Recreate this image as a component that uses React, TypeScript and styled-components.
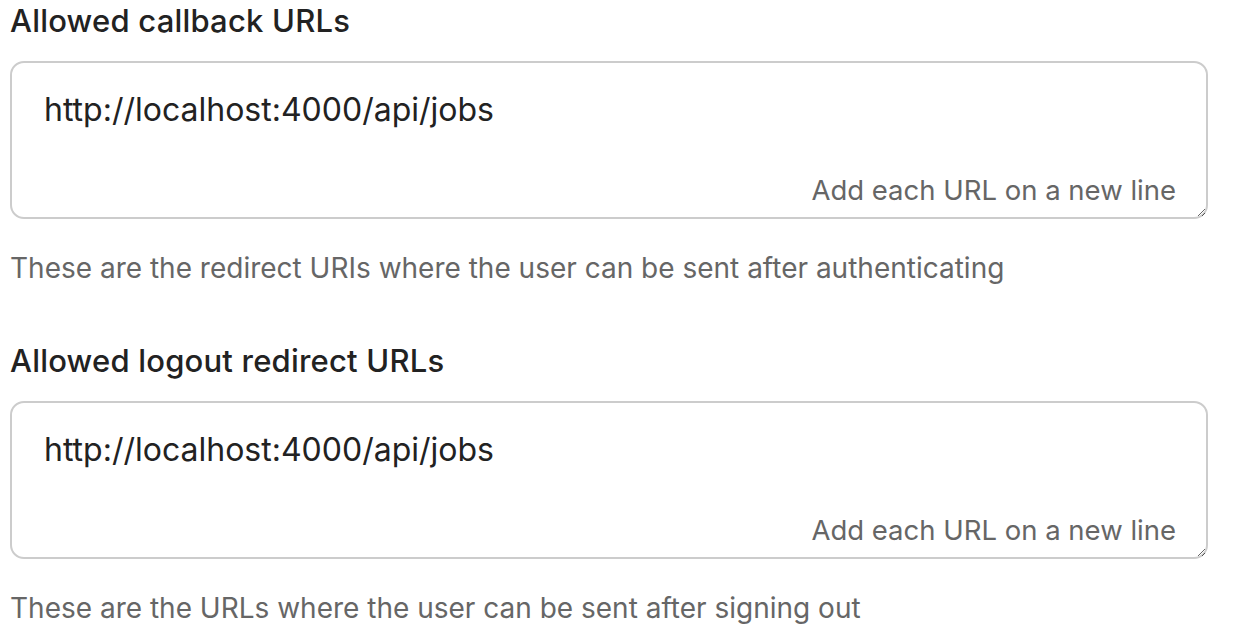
import React, { FC } from 'react';
import styled, { createGlobalStyle } from 'styled-components';

const GlobalStyle = createGlobalStyle`
  body {
    margin: 0;
    background: #ffffff;
    font-family: Inter, "Noto Sans", sans-serif;
  }
`;

const Page = styled.div`
  display: flex;
  flex-direction: column;
  gap: 58px;
  width: 1198px;
  padding: 3px 0 0 10px;
`;

const Section = styled.section`
  display: flex;
  flex-direction: column;
`;

const Label = styled.label`
  font-size: 31px;
  line-height: 36px;
  font-weight: 500;
  letter-spacing: 0.2px;
  color: #222222;
  margin-bottom: 22px;
`;

const Field = styled.div`
  position: relative;
  display: flex;
`;

const Textarea = styled.textarea`
  box-sizing: border-box;
  width: 100%;
  height: 158px;
  padding: 24px 32px;
  border: 2px solid #cccccc;
  border-radius: 14px;
  font-family: Inter, "Noto Sans", sans-serif;
  font-size: 32px;
  line-height: 45px;
  color: #222222;
  background: #ffffff;
  outline: none;
  resize: vertical;
`;

const Hint = styled.span`
  position: absolute;
  right: 32px;
  bottom: 12px;
  font-size: 27.5px;
  line-height: 34px;
  color: #666666;
  pointer-events: none;
`;

const Description = styled.p`
  margin: 32px 0 0;
  font-size: 28px;
  line-height: 34px;
  color: #666666;
`;

interface UrlFieldProps {
  id: string;
  label: string;
  value: string;
  description: string;
}

const UrlField: FC<UrlFieldProps> = ({ id, label, value, description }) => (
  <Section>
    <Label htmlFor={id}>{label}</Label>
    <Field>
      <Textarea id={id} defaultValue={value} spellCheck={false} />
      <Hint>Add each URL on a new line</Hint>
    </Field>
    <Description>{description}</Description>
  </Section>
);

const App: FC = () => (
  <>
    <GlobalStyle />
    <Page>
      <UrlField
        id="callback-urls"
        label="Allowed callback URLs"
        value="http://localhost:4000/api/jobs"
        description="These are the redirect URIs where the user can be sent after authenticating"
      />
      <UrlField
        id="logout-urls"
        label="Allowed logout redirect URLs"
        value="http://localhost:4000/api/jobs"
        description="These are the URLs where the user can be sent after signing out"
      />
    </Page>
  </>
);

export default App;
